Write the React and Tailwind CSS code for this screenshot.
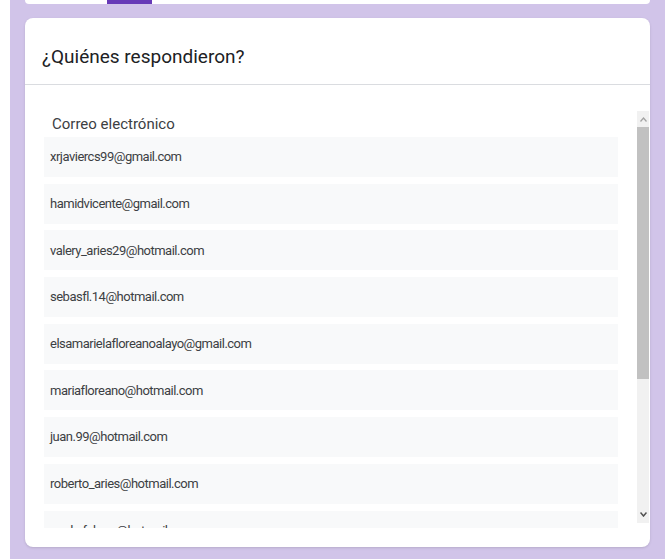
import React from 'react';

const emails = [
  'xrjaviercs99@gmail.com',
  'hamidvicente@gmail.com',
  'valery_aries29@hotmail.com',
  'sebasfl.14@hotmail.com',
  'elsamarielafloreanoalayo@gmail.com',
  'mariafloreano@hotmail.com',
  'juan.99@hotmail.com',
  'roberto_aries@hotmail.com',
  'paola.fabres@hotmail.com',
];

function ScrollBar() {
  return (
    <div className="mt-[7px] mb-[24px] flex w-[12px] flex-col bg-[#f1f1f1]">
      <div className="flex h-[16px] items-center justify-center text-[#a3a3a3]">
        <svg width="7" height="5" viewBox="0 0 7 5" fill="none">
          <path d="M0.5 4.5 L3.5 1 L6.5 4.5" stroke="currentColor" strokeWidth="1.3" />
        </svg>
      </div>
      <div className="h-[252px] bg-[#c1c1c1]" />
      <div className="flex-1" />
      <div className="flex h-[18px] items-center justify-center text-[#505050]">
        <svg width="7" height="5" viewBox="0 0 7 5" fill="none">
          <path d="M0.5 0.5 L3.5 4 L6.5 0.5" stroke="currentColor" strokeWidth="1.5" />
        </svg>
      </div>
    </div>
  );
}

export default function App() {
  return (
    <div
      className="flex h-[559px] w-[665px] bg-white text-[#202124]"
      style={{ fontFamily: 'Roboto, "Liberation Sans", sans-serif' }}
    >
      <div className="w-[10px]" />
      <div className="flex flex-1 flex-col bg-[#d1c4e9] px-[15px]">
        {/* bottom edge of the tab card above */}
        <div className="h-[4px] shrink-0 rounded-b-md bg-white">
          <div className="ml-[82px] h-full w-[45px] bg-[#673ab7]" />
        </div>

        <div className="mt-[14px] flex h-[529px] shrink-0 flex-col overflow-hidden rounded-lg bg-white shadow-sm">
          <div className="flex h-[67px] shrink-0 items-center border-b border-[#dadce0] pl-[17px] pt-[13px] text-[19px]">
            ¿Quiénes respondieron?
          </div>

          <div className="flex min-h-0 flex-1 pl-[19px] pr-[1px] pt-[19px]">
            <div className="mb-[19px] flex min-h-0 flex-1 flex-col overflow-hidden">
              <div className="flex h-[33px] shrink-0 items-center pl-[8px] pt-[7px] text-[15px] text-[#3c4043]">
                Correo electrónico
              </div>
              <div className="flex w-[574px] flex-col gap-[6.7px]">
                {emails.map((email) => (
                  <div
                    key={email}
                    className="flex h-[40px] shrink-0 items-center bg-[#f8f9fa] pl-[6px] text-[13px] tracking-[-0.5px] text-[#3c4043]"
                  >
                    {email}
                  </div>
                ))}
              </div>
            </div>
            <ScrollBar />
          </div>
        </div>
      </div>
    </div>
  );
}
